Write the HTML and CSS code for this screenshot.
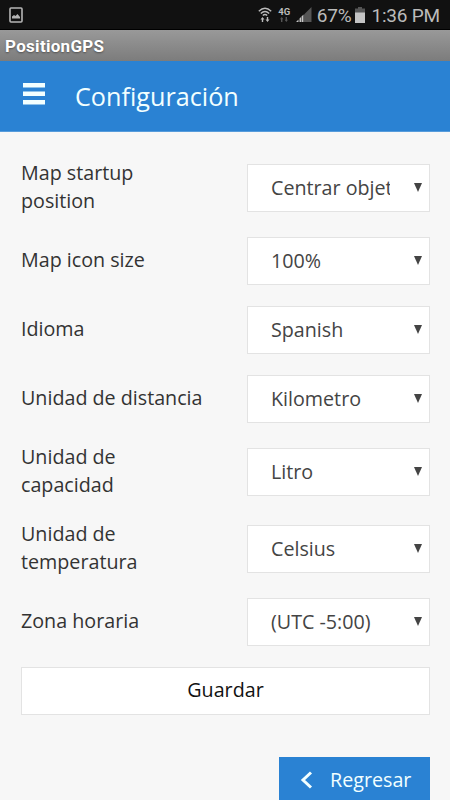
FILE: index.html
```html
<!DOCTYPE html>
<html lang="es">
<head>
    <meta charset="UTF-8">
    <meta name="viewport" content="width=device-width, initial-scale=1.0">
    <title>PositionGPS</title>
    <link rel="stylesheet" href="styles.css">
</head>
<body>
    <div class="status-bar">
        <svg class="icon-picture" width="14" height="16" viewBox="0 0 14 16">
            <rect x="1" y="1" width="12" height="14" rx="1" fill="none" stroke="#b5b5b5" stroke-width="1.6"/>
            <path d="M3 11.5V9.5L5 8l1.500 1L8.500 7l2.500 3v1.500z" fill="#b5b5b5"/>
        </svg>
        <svg class="icon-wifi" width="14" height="16" viewBox="0 0 14 16">
            <g fill="none" stroke="#bbb" stroke-width="1.4">
                <path d="M.8 4.200Q7-1.800 13.200 4.200"/>
                <path d="M2.800 6.400Q7 2.400 11.200 6.400"/>
                <path d="M4.800 8.400Q7 6.400 9.200 8.400"/>
            </g>
            <path d="M2.500 12.500L4.500 10l2 2.500H5.200V15H3.800v-2.500zM7.500 12.500h1.300V10h1.400v2.500h1.300l-2 2.500z" fill="#bbb"/>
        </svg>
        <div class="network">
            <span>4G</span>
            <svg width="10" height="5" viewBox="0 0 10 5">
                <path d="M1 2.200L2.700 0l1.700 2.200h-1V5H2V2.200zM5.600 2.800h1V0H8v2.800h1L7.300 5z" fill="#555"/>
            </svg>
        </div>
        <svg class="icon-signal" width="16" height="15" viewBox="0 0 16 15">
            <path d="M8 15V7.500L15.500 0v15z" fill="#555"/>
            <path d="M0 15l2.500-2.500V15zM3.500 15v-3.500l1.500-1.500v5zM5.500 15V9.500L7.500 7.500V15z" fill="#c4c4c4"/>
        </svg>
        <span class="percent">67%</span>
        <svg class="icon-battery" width="10" height="16" viewBox="0 0 10 16">
            <path d="M3 0h4v1.500h3V6H0V1.500h3z" fill="#555"/>
            <path d="M0 5.500h10V16H0z" fill="#c4c4c4"/>
        </svg>
        <span class="clock">1:36 PM</span>
    </div>
    <div class="title-bar">PositionGPS</div>
    <header>
        <button class="menu" type="button" aria-label="Menu">
            <svg width="22" height="22" viewBox="0 0 22 22">
                <path d="M0 0h22v4.500H0zM0 8.500h22V13H0zM0 17h22v4.500H0z" fill="#f2ffff"/>
            </svg>
        </button>
        <h1>Configuración</h1>
    </header>
    <form class="content">
        <div class="row tall">
            <label for="startup">Map startup position</label>
            <div class="select"><select id="startup"><option>Centrar objetos</option></select></div>
        </div>
        <div class="row">
            <label for="icon-size">Map icon size</label>
            <div class="select"><select id="icon-size"><option>100%</option></select></div>
        </div>
        <div class="row">
            <label for="language">Idioma</label>
            <div class="select"><select id="language"><option>Spanish</option></select></div>
        </div>
        <div class="row">
            <label for="distance">Unidad de distancia</label>
            <div class="select"><select id="distance"><option>Kilometro</option></select></div>
        </div>
        <div class="row tall">
            <label for="capacity">Unidad de capacidad</label>
            <div class="select"><select id="capacity"><option>Litro</option></select></div>
        </div>
        <div class="row tall">
            <label for="temperature">Unidad de temperatura</label>
            <div class="select"><select id="temperature"><option>Celsius</option></select></div>
        </div>
        <div class="row">
            <label for="timezone">Zona horaria</label>
            <div class="select"><select id="timezone"><option>(UTC -5:00)</option></select></div>
        </div>
        <button class="save" type="button">Guardar</button>
        <button class="back" type="button">
            <svg width="13" height="18" viewBox="0 0 13 18">
                <path d="M11 1.500L3 9l8 7.500" fill="none" stroke="#f2ffff" stroke-width="3"/>
            </svg>
            Regresar
        </button>
    </form>
</body>
</html>
```

FILE: styles.css
```css
* {
    box-sizing: border-box;
}
body {
    font-family: 'Open Sans', sans-serif;
    font-size: 19.7px;
    background-color: #f7f7f7;
    color: #333;
    margin: 0;
    height: 800px;
    overflow: hidden;
}
button, select {
    font: inherit;
    border: 0;
    border-radius: 0;
    margin: 0;
    padding: 0;
}
.status-bar {
    display: flex;
    align-items: center;
    height: 30px;
    padding: 0 10px 0 9px;
    background-color: #111;
    border-bottom: 1px solid #000;
    color: #bbb;
    font-family: Roboto, sans-serif;
    font-size: 19px;
}
.icon-wifi {
    margin-left: auto;
    margin-right: 6px;
}
.network {
    display: flex;
    flex-direction: column;
    align-items: center;
    width: 13px;
    margin-right: 5px;
    font-size: 9.5px;
    font-weight: bold;
    line-height: 10px;
}
.icon-signal {
    margin-right: 5px;
}
.percent, .clock {
    padding-top: 2px;
    letter-spacing: -0.2px;
}
.icon-battery {
    margin: 0 6px 0 4px;
}
.title-bar {
    height: 31px;
    padding-left: 5px;
    background: linear-gradient(#999, #7c7c7c);
    color: #fff;
    font-family: Roboto, sans-serif;
    font-size: 17px;
    font-weight: bold;
    line-height: 32px;
    letter-spacing: 0.3px;
    text-shadow: 0 1px 2px rgba(0, 0, 0, 0.4);
}
header {
    display: flex;
    align-items: center;
    height: 71px;
    padding-left: 23px;
    background-color: #2a82d3;
    border-bottom: 1px solid #579cdb;
    color: #f2ffff;
}
.menu {
    display: flex;
    margin: -4px 30px 0 0;
    background: none;
}
h1 {
    margin: -1px 0 0;
    font-size: 25.2px;
    font-weight: normal;
}
.content {
    display: flex;
    flex-direction: column;
    gap: 21px;
    padding: 28px 20px 0 21px;
}
.row {
    display: flex;
    justify-content: space-between;
    align-items: center;
    height: 48px;
}
.tall {
    height: 56px;
}
label {
    width: 190px;
    margin-top: -3px;
    line-height: 28px;
}
.tall label {
    width: 150px;
}
.select {
    position: relative;
    width: 183px;
    height: 48px;
}
.select::after {
    content: "";
    position: absolute;
    top: 19px;
    right: 8px;
    border: 4.5px solid transparent;
    border-top: 9px solid #444;
    border-bottom: 0;
}
select {
    appearance: none;
    width: 100%;
    height: 100%;
    padding: 0 39px 2px 23px;
    background-color: #fff;
    border: 1px solid #e3e3e3;
    color: #444;
}
.save {
    height: 48px;
    padding-bottom: 4px;
    background-color: #fff;
    border: 1px solid #e3e3e3;
    color: #111;
}
.back {
    display: flex;
    align-items: center;
    align-self: flex-end;
    gap: 17px;
    width: 151px;
    height: 48px;
    margin-top: 21px;
    padding: 0 0 3px 21px;
    background-color: #2a82d3;
    color: #f2ffff;
}
```
